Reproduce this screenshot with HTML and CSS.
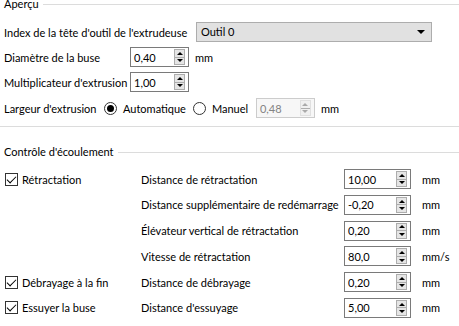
FILE: index.html
```html
<!DOCTYPE html>
<html lang="fr">
<head>
  <meta charset="UTF-8" />
  <title>Extrudeuse</title>
  <link rel="stylesheet" href="styles.css">
</head>
<body>
  <div class="group-title first"><span>Aperçu</span></div>

  <div class="preview">
    <div class="row">
      <span class="label-wide">Index de la tête d'outil de l'extrudeuse</span>
      <div class="combo">Outil 0<i class="combo-arrow"></i></div>
    </div>
    <div class="row">
      <span class="label-mid">Diamètre de la buse</span>
      <div class="spin"><span class="val">0,40</span><span class="arrows"><i class="up"></i><i class="down"></i></span></div>
      <span class="unit">mm</span>
    </div>
    <div class="row">
      <span class="label-mid">Multiplicateur d'extrusion</span>
      <div class="spin"><span class="val">1,00</span><span class="arrows"><i class="up"></i><i class="down"></i></span></div>
    </div>
    <div class="row">
      <span class="label-radio">Largeur d'extrusion</span>
      <span class="radio checked"></span><span class="radio-text">Automatique</span>
      <span class="radio"></span><span class="radio-text manual">Manuel</span>
      <div class="spin disabled"><span class="val">0,48</span><span class="arrows"><i class="up"></i><i class="down"></i></span></div>
      <span class="unit">mm</span>
    </div>
  </div>

  <div class="separator"></div>

  <div class="group-title"><span>Contrôle d'écoulement</span></div>

  <div class="flow">
    <div class="check-cell"><span class="check"></span>Rétractation</div>
    <span>Distance de rétractation</span>
    <div class="spin wide"><span class="val">10,00</span><span class="arrows"><i class="up"></i><i class="down"></i></span></div>
    <span class="unit">mm</span>

    <div></div>
    <span>Distance supplémentaire de redémarrage</span>
    <div class="spin wide"><span class="val">-0,20</span><span class="arrows"><i class="up"></i><i class="down"></i></span></div>
    <span class="unit">mm</span>

    <div></div>
    <span>Élévateur vertical de rétractation</span>
    <div class="spin wide"><span class="val">0,20</span><span class="arrows"><i class="up"></i><i class="down"></i></span></div>
    <span class="unit">mm</span>

    <div></div>
    <span>Vitesse de rétractation</span>
    <div class="spin wide"><span class="val">80,0</span><span class="arrows"><i class="up"></i><i class="down"></i></span></div>
    <span class="unit">mm/s</span>

    <div class="check-cell"><span class="check"></span>Débrayage à la fin</div>
    <span>Distance de débrayage</span>
    <div class="spin wide"><span class="val">0,20</span><span class="arrows"><i class="up"></i><i class="down"></i></span></div>
    <span class="unit">mm</span>

    <div class="check-cell"><span class="check"></span>Essuyer la buse</div>
    <span>Distance d'essuyage</span>
    <div class="spin wide"><span class="val">5,00</span><span class="arrows"><i class="up"></i><i class="down"></i></span></div>
    <span class="unit">mm</span>
  </div>
</body>
</html>
```

FILE: styles.css
```css
* {
  margin: 0;
  padding: 0;
  box-sizing: border-box;
}

body {
  width: 459px;
  height: 326px;
  overflow: hidden;
  background: #fff;
  color: #000;
  font-family: "Lato", "Roboto", sans-serif;
  font-size: 11px;
  white-space: nowrap;
}

/* group headers with the line running to the right */
.group-title {
  display: flex;
  align-items: center;
  height: 12px;
  line-height: 12px;
  padding-left: 4px;
}

.group-title::after {
  content: "";
  flex: 1;
  height: 1px;
  background: #dcdcdc;
  margin-left: 4px;
}

.group-title.first {
  margin-top: -2px;
}

/* Aperçu */
.preview {
  padding: 12px 0 0 4px;
  display: flex;
  flex-direction: column;
  gap: 5px;
}

.row {
  display: flex;
  align-items: center;
  height: 20px;
}

.row:last-child {
  margin-top: 1px;
}

.label-wide { width: 192px; }
.label-mid { width: 126px; }
.label-radio { width: 100px; }

.combo {
  position: relative;
  width: 236px;
  height: 20px;
  line-height: 18px;
  padding-left: 4px;
  background: #e1e1e1;
  border: 1px solid #adadad;
}

.combo-arrow {
  position: absolute;
  right: 6px;
  top: 7px;
  border-left: 4px solid transparent;
  border-right: 4px solid transparent;
  border-top: 4px solid #000;
}

.unit {
  margin-left: 6px;
}

.radio {
  width: 13px;
  height: 13px;
  border: 1px solid #333;
  border-radius: 50%;
  display: flex;
  align-items: center;
  justify-content: center;
}

.radio.checked::before {
  content: "";
  width: 7px;
  height: 7px;
  border-radius: 50%;
  background: #000;
}

.radio-text {
  margin: 0 7px 0 6px;
}

.radio-text.manual {
  width: 35px;
  margin-right: 9px;
}

/* spin boxes */
.spin {
  width: 59px;
  height: 20px;
  border: 1px solid #7a7a7a;
  background: #fff;
  display: flex;
  align-items: center;
  padding-left: 3px;
}

.spin.wide {
  width: 67px;
}

.spin .val {
  flex: 1;
}

.arrows {
  width: 11px;
  height: 16px;
  margin-right: 3px;
  display: flex;
  flex-direction: column;
  border: 1px solid #adadad;
  background: #e5e5e5;
}

.arrows i {
  flex: 1;
  display: flex;
  align-items: center;
  justify-content: center;
}

.arrows i + i {
  border-top: 1px solid #adadad;
}

.arrows .up::before,
.arrows .down::before {
  content: "";
  border-left: 3px solid transparent;
  border-right: 3px solid transparent;
}

.arrows .up::before { border-bottom: 3px solid #000; }
.arrows .down::before { border-top: 3px solid #000; }

.spin.disabled {
  border-color: #cccccc;
  background: #f7f7f7;
  color: #838383;
}

.spin.disabled .arrows {
  border-color: #e0e0e0;
  background: #f0f0f0;
}

.spin.disabled .arrows .up::before { border-bottom-color: #aaa; }
.spin.disabled .arrows .down::before { border-top-color: #aaa; }

.separator {
  height: 1px;
  background: #dcdcdc;
  margin: 8px 0 19px;
}

/* Contrôle d'écoulement */
.flow {
  display: grid;
  grid-template-columns: 141px 203px 67px auto;
  grid-auto-rows: 20px;
  row-gap: 5.8px;
  align-items: center;
  margin-top: 11px;
}

.flow .unit {
  margin-left: 11px;
}

.check-cell {
  display: flex;
  align-items: center;
  padding-left: 5px;
}

.check {
  width: 13px;
  height: 13px;
  border: 1px solid #333;
  margin-right: 4px;
  position: relative;
}

.check::after {
  content: "";
  position: absolute;
  left: 3px;
  top: 0px;
  width: 4px;
  height: 8px;
  border-right: 1px solid #000;
  border-bottom: 1px solid #000;
  transform: rotate(45deg);
}
```
